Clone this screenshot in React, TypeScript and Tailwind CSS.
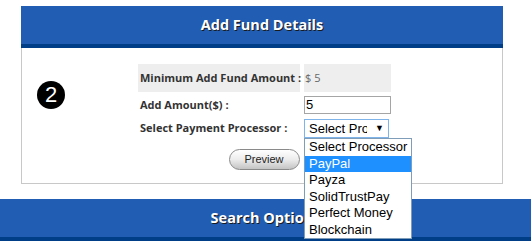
const processors = [
  'Select Processor',
  'PayPal',
  'Payza',
  'SolidTrustPay',
  'Perfect Money',
  'Blockchain',
];

const SectionHeader = ({ title }: { title: string }) => (
  <div className="h-[42px] bg-[#215eb3] border-b-[4px] border-[#003f88] flex items-center justify-center">
    <h2
      className="text-[14.5px] font-bold text-white font-['Open_Sans',sans-serif] [text-shadow:1px_1px_0_#1a1a1a]"
    >
      {title}
    </h2>
  </div>
);

const App = () => {
  const labelCls =
    "text-[11px] font-bold text-[#333] font-['Open_Sans',sans-serif] whitespace-nowrap flex items-center pl-[2px]";

  return (
    <div className="w-[531px] h-[249px] bg-white overflow-hidden">
      <div className="ml-[21px] mt-[6px] w-[482px]">
        <SectionHeader title="Add Fund Details" />
        <div className="h-[136px] border-x border-b border-[#c8c8c8] flex pl-[15px] pt-[16px]">
          <div className="mt-[17px] w-[28px] h-[28px] rounded-full bg-black text-white flex items-center justify-center text-[22px] font-['Liberation_Sans',Arial,sans-serif] leading-none">
            2
          </div>
          <div className="ml-[73px] flex flex-col">
            <div className="grid grid-cols-[162px_87px] gap-x-[4px] gap-y-[4px]">
              <div className={`${labelCls} h-[28px] bg-[#eeeeee]`}>
                Minimum Add Fund Amount :
              </div>
              <div className="h-[28px] bg-[#eeeeee] flex items-center pl-[1px] text-[11px] text-[#666] font-['Open_Sans',sans-serif]">
                $ 5
              </div>

              <div className={`${labelCls} h-[19px]`}>Add Amount($) :</div>
              <div className="h-[19px] flex items-start">
                <div className="w-[87px] h-[18px] border border-[#a5a5a5] flex items-center text-[13px] text-black font-['Liberation_Sans',Arial,sans-serif] pl-[1px]">
                  5
                </div>
              </div>

              <div className={`${labelCls} h-[19px]`}>
                Select Payment Processor :
              </div>
              <div className="relative h-[19px]">
                <div className="w-[85px] h-[19px] border border-[#7eb4ea] flex items-center text-[13px] text-black font-['Liberation_Sans',Arial,sans-serif]">
                  <span className="pl-[4px] w-[62px] overflow-hidden whitespace-nowrap">
                    Select Processor
                  </span>
                  <span className="ml-[8px] text-[9px]">▼</span>
                </div>
                <ul className="absolute left-0 top-[19px] z-10 w-[108px] bg-white border border-[#7f9db9] font-['Liberation_Sans',Arial,sans-serif] text-[13px]">
                  {processors.map((p) => (
                    <li
                      key={p}
                      className={`h-[16.5px] leading-[16.5px] pl-[4px] whitespace-nowrap ${
                        p === 'PayPal' ? 'bg-[#1e90ff] text-white' : 'text-black'
                      }`}
                    >
                      {p}
                    </li>
                  ))}
                </ul>
              </div>
            </div>
            <div className="mt-[11px] flex justify-center pr-[1px]">
              <button className="w-[71px] h-[21px] rounded-full border border-[#8a8a8a] bg-gradient-to-b from-[#ffffff] via-[#ececec] to-[#c4c4c4] text-[11px] text-[#222] font-['Liberation_Sans',Arial,sans-serif] flex items-center justify-center">
                Preview
              </button>
            </div>
          </div>
        </div>
      </div>
      <div className="mt-[15px]">
        <SectionHeader title="Search Options" />
      </div>
    </div>
  );
};

export default App;
